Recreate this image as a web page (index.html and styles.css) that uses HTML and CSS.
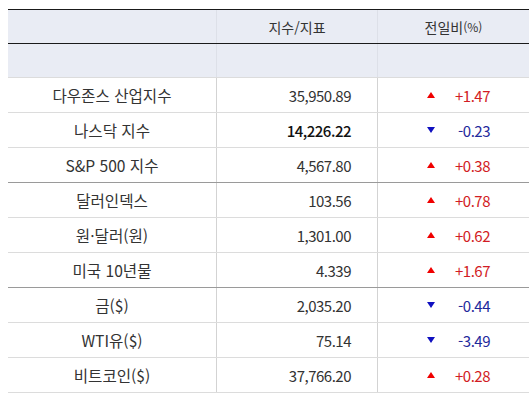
FILE: index.html
```html
<!DOCTYPE html>
<html lang="ko">
<head>
<meta charset="utf-8">
<link rel="stylesheet" href="styles.css">
</head>
<body>
<div class="tbl">
  <div class="row head">
    <div class="cell"></div>
    <div class="cell c2">지수/지표</div>
    <div class="cell c3h">전일비<small>(%)</small></div>
  </div>
  <div class="row blank">
    <div class="cell"></div><div class="cell"></div><div class="cell"></div>
  </div>
  <div class="row">
    <div class="cell name">다우존스 산업지수</div>
    <div class="cell num">35,950.89</div>
    <div class="cell chg up"><span class="tri"></span><span class="val">+1.47</span></div>
  </div>
  <div class="row">
    <div class="cell name">나스닥 지수</div>
    <div class="cell num strong">14,226.22</div>
    <div class="cell chg down"><span class="tri"></span><span class="val">-0.23</span></div>
  </div>
  <div class="row group-end">
    <div class="cell name">S&amp;P 500 지수</div>
    <div class="cell num">4,567.80</div>
    <div class="cell chg up"><span class="tri"></span><span class="val">+0.38</span></div>
  </div>
  <div class="row">
    <div class="cell name">달러인덱스</div>
    <div class="cell num">103.56</div>
    <div class="cell chg up"><span class="tri"></span><span class="val">+0.78</span></div>
  </div>
  <div class="row">
    <div class="cell name">원·달러(원)</div>
    <div class="cell num">1,301.00</div>
    <div class="cell chg up"><span class="tri"></span><span class="val">+0.62</span></div>
  </div>
  <div class="row group-end">
    <div class="cell name">미국 10년물</div>
    <div class="cell num">4.339</div>
    <div class="cell chg up"><span class="tri"></span><span class="val">+1.67</span></div>
  </div>
  <div class="row">
    <div class="cell name">금($)</div>
    <div class="cell num">2,035.20</div>
    <div class="cell chg down"><span class="tri"></span><span class="val">-0.44</span></div>
  </div>
  <div class="row">
    <div class="cell name">WTI유($)</div>
    <div class="cell num">75.14</div>
    <div class="cell chg down"><span class="tri"></span><span class="val">-3.49</span></div>
  </div>
  <div class="row">
    <div class="cell name">비트코인($)</div>
    <div class="cell num">37,766.20</div>
    <div class="cell chg up"><span class="tri"></span><span class="val">+0.28</span></div>
  </div>
</div>
</body>
</html>
```
FILE: styles.css
```css
html, body {
  margin: 0;
  padding: 0;
  background: #fff;
}
body {
  padding: 9px 0 0 8px;
  font-family: "Noto Sans CJK KR", "Noto Sans", sans-serif;
  font-size: 14px;
  color: #333;
}
.tbl {
  width: 521px;
  border-top: 1px solid #1a1a1a;
}
.row {
  display: grid;
  grid-template-columns: 208px 161px 152px;
  height: 35px;
  box-sizing: border-box;
  border-bottom: 1px solid #dcdcdc;
}
.row.group-end {
  border-bottom-color: #9a9a9a;
}
.row.head {
  height: 34px;
  background: #e9ecf4;
  border-bottom: 1px solid #1a1a1a;
}
.row.blank {
  height: 34px;
  background: #e9ecf4;
}
.cell {
  display: flex;
  align-items: center;
  box-sizing: border-box;
  white-space: nowrap;
}
.cell + .cell {
  border-left: 1px solid #d3d3d3;
}
.head .cell + .cell,
.blank .cell + .cell {
  border-left-color: #dde0e8;
}
.c2 {
  justify-content: center;
  color: #333;
}
.c3h {
  justify-content: center;
  color: #333;
}
.c3h small {
  font-size: 12px;
}
.name {
  justify-content: center;
  font-size: 15.6px;
}
.num {
  justify-content: flex-end;
  padding-right: 26px;
  font-size: 15px;
  letter-spacing: -0.5px;
}
.num.strong {
  color: #111;
  font-weight: 500;
}
.chg {
  padding-left: 49px;
  padding-right: 39px;
  font-size: 15px;
  letter-spacing: -0.5px;
}
.tri {
  width: 0;
  height: 0;
  border-left: 4px solid transparent;
  border-right: 4px solid transparent;
}
.up .tri {
  border-bottom: 6px solid #f00000;
}
.down .tri {
  border-top: 6px solid #1010c0;
}
.val {
  flex: 1;
  text-align: right;
}
.up .val {
  color: #d21c24;
}
.down .val {
  color: #1f2a9c;
}
```
